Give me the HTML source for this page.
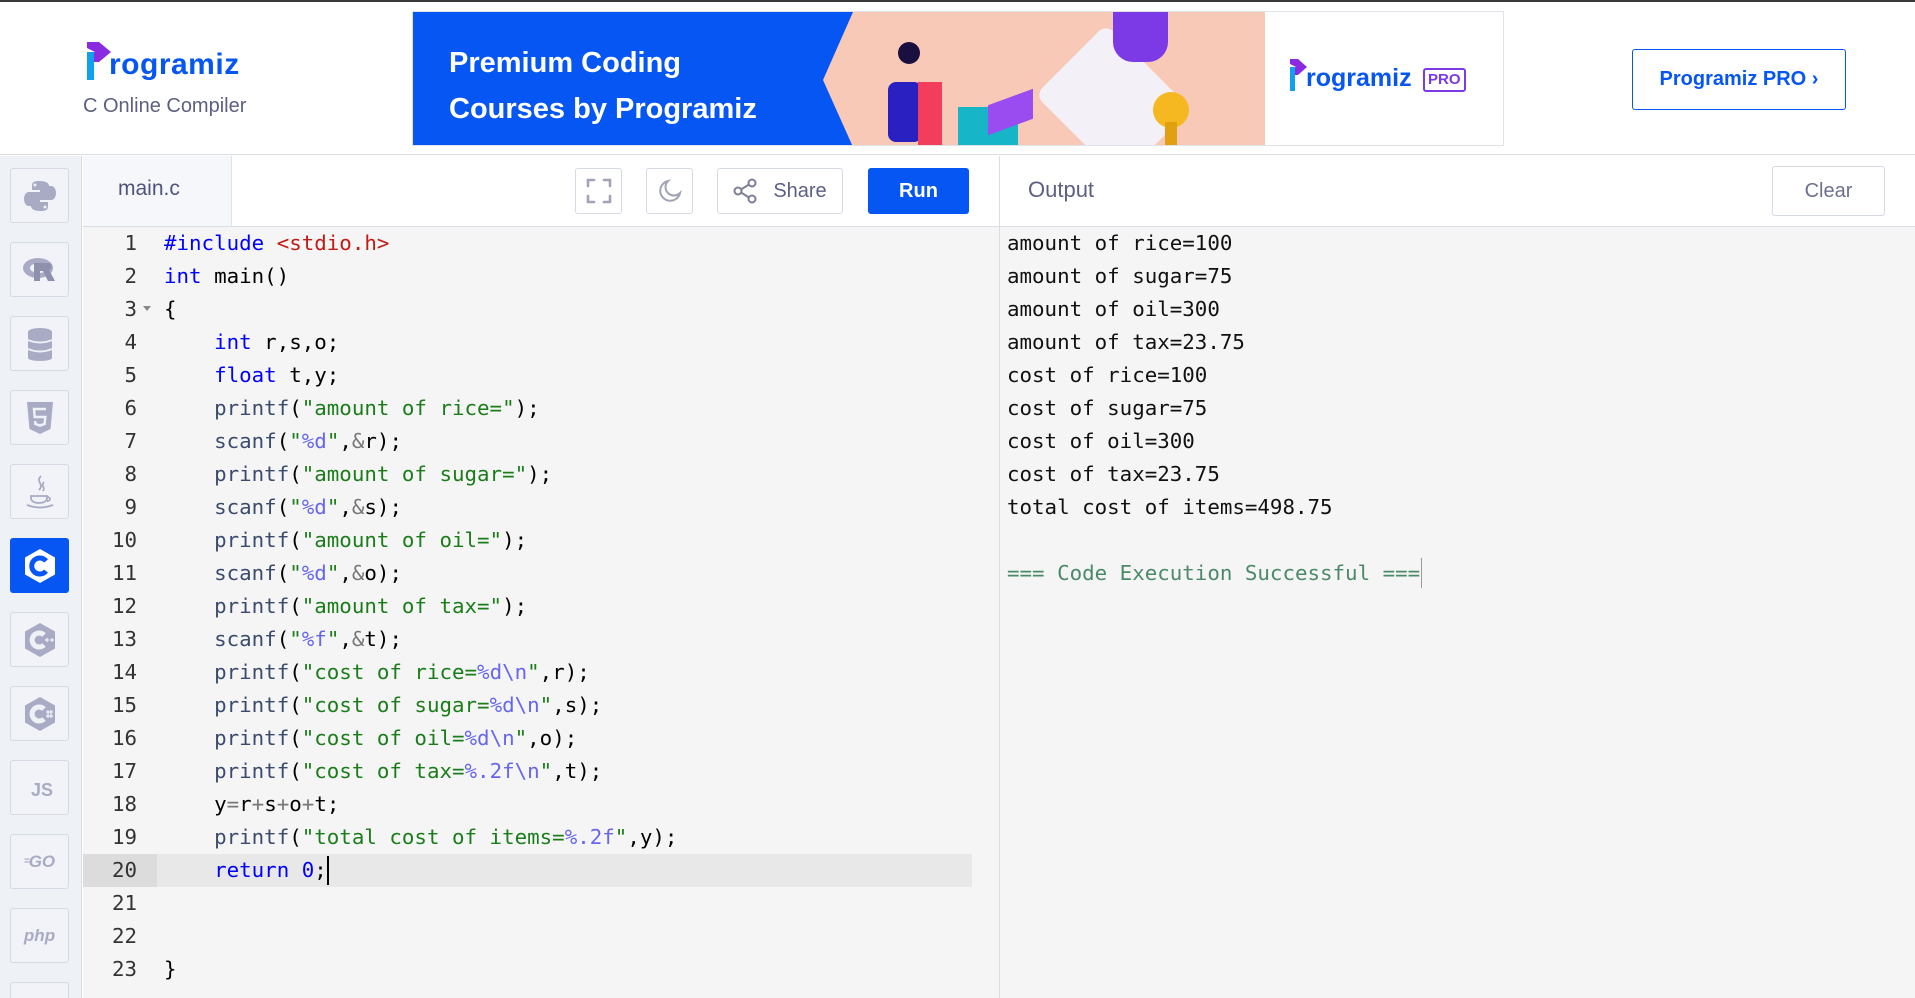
<!DOCTYPE html>
<html style="width:1915px;height:998px;overflow:hidden"><head><meta charset="utf-8"><style>
*{margin:0;padding:0;box-sizing:border-box}
body{width:1915px;height:998px;overflow:hidden;background:#fff;font-family:"Liberation Sans",sans-serif;position:relative}
.abs{position:absolute}
#topbar{left:0;top:0;width:1915px;height:2px;background:#3a3a3a}
#header{left:0;top:2px;width:1915px;height:153px;background:#fff;border-bottom:1px solid #d8dde6}
.side{left:0;top:156px;width:82px;height:842px;background:#eef1f6;border-right:1px solid #d8dde6;overflow:hidden}
.ib{position:absolute;left:10px;width:59px;height:55px;border:1px solid #d6dae4;border-radius:3px;background:#f1f3f8;display:flex;align-items:center;justify-content:center}
.ib.act{background:#0556f3;border-color:#0556f3}
.code{font-family:"DejaVu Sans Mono","Liberation Mono",monospace;font-size:20.8px;line-height:33px;white-space:pre}
.kw{color:#0000ff}.inc{color:#c41a16}.str{color:#1a7d1a}.fn{color:#3b4b6e}.fmt{color:#6666ee}.op{color:#777}
.btn{position:absolute;border:1px solid #d6dae4;border-radius:3px;background:#fff;display:flex;align-items:center;justify-content:center}
</style></head><body>
<div id="topbar" class="abs"></div>
<div id="header" class="abs">
  <svg class="abs" style="left:85px;top:38px" width="30" height="42" viewBox="0 0 30 42">
    <polygon points="2,2 14,2 26,12 14,22 2,22 2,14 10,12 2,8" fill="#8a2be2"/>
    <rect x="2" y="12" width="7" height="28" fill="#10a0f0"/>
  </svg>
  <div class="abs" style="left:109px;top:46px;font-size:30px;font-weight:bold;color:#0556f3;letter-spacing:0.5px">rogramiz</div>
  <div class="abs" style="left:83px;top:93px;font-size:20px;color:#5c5f84">C Online Compiler</div>
  <div class="abs" style="left:412px;top:9px;width:1092px;height:135px;background:#f9c9b8;overflow:hidden;border:1px solid #dfe3ea">
    <div class="abs" style="left:0;top:0;width:440px;height:135px;background:#0556f3;clip-path:polygon(0 0,440px 0,410px 68px,440px 135px,0 135px)"></div>
    <div class="abs" style="left:36px;top:28px;font-size:29px;font-weight:bold;color:#fff;line-height:46px">Premium Coding<br>Courses by Programiz</div>
    <div class="abs" style="left:485px;top:30px;width:22px;height:22px;border-radius:50%;background:#1a1040"></div>
    <div class="abs" style="left:475px;top:70px;width:34px;height:60px;border-radius:8px;background:#2a1fc0"></div>
    <div class="abs" style="left:505px;top:70px;width:24px;height:65px;background:#f23e5c"></div>
    <div class="abs" style="left:545px;top:95px;width:60px;height:45px;background:#16b5c8"></div>
    <div class="abs" style="left:575px;top:85px;width:45px;height:30px;background:#9a4cf0;transform:skewY(-20deg)"></div>
    <div class="abs" style="left:640px;top:40px;width:120px;height:100px;background:#f4f0f8;transform:rotate(45deg);border-radius:10px"></div>
    <div class="abs" style="left:700px;top:0;width:55px;height:50px;background:#7b3ae6;border-radius:0 0 20px 20px"></div>
    <div class="abs" style="left:740px;top:80px;width:36px;height:36px;border-radius:50%;background:#f5b820"></div>
    <div class="abs" style="left:752px;top:110px;width:12px;height:30px;background:#e0a010"></div>
    <div class="abs" style="left:852px;top:0;width:240px;height:135px;background:#fff"></div>
    <svg class="abs" style="left:876px;top:46px" width="20" height="34" viewBox="0 0 20 34"><polygon points="1,1 9,1 18,9 9,17 1,17 1,11 7,9 1,6" fill="#8a2be2"/><rect x="1" y="9" width="5" height="24" fill="#10a0f0"/></svg>
    <div class="abs" style="left:893px;top:52px;font-size:25px;font-weight:bold;color:#0556f3">rogramiz</div>
    <div class="abs" style="left:1010px;top:56px;padding:0 3px;border:2px solid #7b3ae6;border-radius:3px;font-size:15px;font-weight:bold;color:#7b3ae6;line-height:20px">PRO</div>
  </div>
  <div class="abs" style="left:1632px;top:47px;width:214px;height:61px;border:1px solid #0556f3;border-radius:3px;color:#0556f3;font-size:20px;font-weight:bold;display:flex;align-items:center;justify-content:center">Programiz PRO ›</div>
</div>

<div class="abs side">
  <div class="ib" style="top:12px"><svg width="34" height="34" viewBox="0 0 34 34"><path d="M16 2c-7 0-7 3-7 5v4h8v2H6c-3 0-5 3-5 7s2 7 5 7h3v-5c0-3 2-5 5-5h8c2 0 4-2 4-4V7c0-3-3-5-10-5z" fill="#a9abc4"/><path d="M18 32c7 0 7-3 7-5v-4h-8v-2h11c3 0 5-3 5-7s-2-7-5-7h-3v5c0 3-2 5-5 5h-8c-2 0-4 2-4 4v6c0 3 3 5 10 5z" fill="#a9abc4"/><circle cx="12" cy="6" r="1.5" fill="#eef1f6"/><circle cx="22" cy="28" r="1.5" fill="#eef1f6"/></svg></div>
  <div class="ib" style="top:86px"><svg width="36" height="30" viewBox="0 0 36 30"><ellipse cx="16" cy="13" rx="15" ry="10" fill="#a9abc4"/><ellipse cx="17" cy="13" rx="9" ry="5" fill="#eef1f6"/><path d="M12 8h14c4 0 5 6 1 7l6 11h-7l-5-10h-3v10h-6z" fill="#8e90ad"/></svg></div>
  <div class="ib" style="top:160px"><svg width="26" height="34" viewBox="0 0 26 34"><ellipse cx="13" cy="5" rx="12" ry="4" fill="#a9abc4"/><rect x="1" y="5" width="24" height="26" fill="#a9abc4"/><ellipse cx="13" cy="31" rx="12" ry="3" fill="#a9abc4"/><path d="M1 13q12 5 24 0M1 22q12 5 24 0" stroke="#eef1f6" stroke-width="2" fill="none"/></svg></div>
  <div class="ib" style="top:234px"><svg width="28" height="34" viewBox="0 0 28 34"><path d="M1 1h26l-2.5 27L14 33 3.5 28z" fill="#a9abc4"/><path d="M20 8H8l.7 8h10.6l-.7 7-4.6 1.5L9.4 23l-.3-3" stroke="#eef1f6" stroke-width="2.5" fill="none"/></svg></div>
  <div class="ib" style="top:308px"><svg width="30" height="36" viewBox="0 0 30 36"><path d="M16 2c-6 6 4 8-2 14M19 8c-4 4 2 5-1 9" stroke="#a9abc4" stroke-width="1.8" fill="none"/><path d="M6 22h16v2c0 3-3 5-8 5s-8-2-8-5zM22 23c4 0 4 4 0 4" stroke="#a9abc4" stroke-width="1.8" fill="none"/><path d="M2 31q13 5 26 0" stroke="#a9abc4" stroke-width="1.8" fill="none"/></svg></div>
  <div class="ib act" style="top:382px"><svg width="34" height="36" viewBox="0 0 34 36"><path d="M17 1l15 8.5v17L17 35 2 26.5v-17z" fill="#fff"/><path d="M23 13a8 8 0 1 0 0 10" stroke="#0556f3" stroke-width="5" fill="none"/></svg></div>
  <div class="ib" style="top:456px"><svg width="34" height="36" viewBox="0 0 34 36"><path d="M17 1l15 8.5v17L17 35 2 26.5v-17z" fill="#a9abc4"/><path d="M21 13a7 7 0 1 0 0 10" stroke="#eef1f6" stroke-width="5" fill="none"/><path d="M24 16v4M22 18h4M29 16v4M27 18h4" stroke="#eef1f6" stroke-width="1.3"/></svg></div>
  <div class="ib" style="top:530px"><svg width="34" height="36" viewBox="0 0 34 36"><path d="M17 1l15 8.5v17L17 35 2 26.5v-17z" fill="#a9abc4"/><path d="M21 13a7 7 0 1 0 0 10" stroke="#eef1f6" stroke-width="5" fill="none"/><path d="M25 14v8M28 14v8M23 16h7M23 20h7" stroke="#eef1f6" stroke-width="1.3"/></svg></div>
  <div class="ib" style="top:604px;font-weight:bold;font-size:18px;color:#a9abc4;padding-left:5px;padding-top:6px">JS</div>
  <div class="ib" style="top:678px;font-weight:bold;font-style:italic;font-size:17px;color:#a9abc4"><span style="font-size:10px;letter-spacing:-1px">=</span>GO</div>
  <div class="ib" style="top:752px;font-weight:bold;font-style:italic;font-size:17px;color:#a9abc4">php</div>
  <div class="ib" style="top:826px"></div>
</div>

<div class="abs" style="left:83px;top:156px;width:916px;height:71px;background:#fff;border-bottom:1px solid #d8dde6"></div>
<div class="abs" style="left:83px;top:156px;width:149px;height:70px;background:#f6f7fa;border-right:1px solid #dfe3ea"></div>
<div class="abs" style="left:118px;top:177px;font-size:21px;color:#50537a">main.c</div>
<div class="btn" style="left:575px;top:168px;width:47px;height:46px"><svg width="26" height="26" viewBox="0 0 26 26" fill="none" stroke="#a2a2b8" stroke-width="2.6" stroke-linecap="round"><path d="M2 8V2h6M18 2h6v6M24 18v6h-6M8 24H2v-6"/></svg></div>
<div class="btn" style="left:646px;top:168px;width:47px;height:46px"><svg width="24" height="24" viewBox="0 0 24 24" fill="none" stroke="#a2a2b8" stroke-width="2"><path d="M10 2a10 10 0 1 0 12 12A8 8 0 0 1 10 2z"/></svg></div>
<div class="btn" style="left:717px;top:168px;width:126px;height:46px;color:#5c5f84;font-size:20px;gap:14px"><svg width="26" height="26" viewBox="0 0 26 26" fill="none" stroke="#7e7f98" stroke-width="2"><circle cx="19" cy="5" r="3.5"/><circle cx="5" cy="13" r="3.5"/><circle cx="19" cy="21" r="3.5"/><path d="M8 11.5l8-5M8 14.5l8 5"/></svg>Share</div>
<div class="abs" style="left:868px;top:168px;width:101px;height:46px;background:#0556f3;border-radius:3px;color:#fff;font-weight:bold;font-size:20px;display:flex;align-items:center;justify-content:center">Run</div>

<div class="abs" style="left:83px;top:227px;width:916px;height:771px;background:#f5f5f5"></div>
<div class="abs" style="left:83px;top:854px;width:74px;height:33px;background:#dcdcdc"></div>
<div class="abs" style="left:157px;top:854px;width:815px;height:33px;background:#e8e8e8"></div>
<div class="abs code" style="left:83px;top:227px;width:54px;text-align:right;color:#333">1
2
3
4
5
6
7
8
9
10
11
12
13
14
15
16
17
18
19
20
21
22
23</div>
<div class="abs" style="left:143px;top:306px;width:0;height:0;border-left:4px solid transparent;border-right:4px solid transparent;border-top:5px solid #888"></div>
<div class="abs code" style="left:164px;top:227px;color:#000"><span class="kw">#include</span> <span class="inc">&lt;stdio.h&gt;</span>
<span class="kw">int</span> main()
{
    <span class="kw">int</span> r,s,o;
    <span class="kw">float</span> t,y;
    <span class="fn">printf</span>(<span class="str">"amount of rice="</span>);
    <span class="fn">scanf</span>(<span class="str">"<span class="fmt">%d</span>"</span>,<span class="op">&amp;</span>r);
    <span class="fn">printf</span>(<span class="str">"amount of sugar="</span>);
    <span class="fn">scanf</span>(<span class="str">"<span class="fmt">%d</span>"</span>,<span class="op">&amp;</span>s);
    <span class="fn">printf</span>(<span class="str">"amount of oil="</span>);
    <span class="fn">scanf</span>(<span class="str">"<span class="fmt">%d</span>"</span>,<span class="op">&amp;</span>o);
    <span class="fn">printf</span>(<span class="str">"amount of tax="</span>);
    <span class="fn">scanf</span>(<span class="str">"<span class="fmt">%f</span>"</span>,<span class="op">&amp;</span>t);
    <span class="fn">printf</span>(<span class="str">"cost of rice=<span class="fmt">%d\n</span>"</span>,r);
    <span class="fn">printf</span>(<span class="str">"cost of sugar=<span class="fmt">%d\n</span>"</span>,s);
    <span class="fn">printf</span>(<span class="str">"cost of oil=<span class="fmt">%d\n</span>"</span>,o);
    <span class="fn">printf</span>(<span class="str">"cost of tax=<span class="fmt">%.2f\n</span>"</span>,t);
    y<span class="op">=</span>r<span class="op">+</span>s<span class="op">+</span>o<span class="op">+</span>t;
    <span class="fn">printf</span>(<span class="str">"total cost of items=<span class="fmt">%.2f</span>"</span>,y);
    <span class="kw">return</span> <span class="kw">0</span>;
 
 
}</div>
<div class="abs" style="left:327px;top:856px;width:2px;height:29px;background:#000"></div>

<div class="abs" style="left:999px;top:156px;width:1px;height:842px;background:#d8dde6"></div>
<div class="abs" style="left:1000px;top:156px;width:915px;height:71px;background:#fff;border-bottom:1px solid #d8dde6"></div>
<div class="abs" style="left:1028px;top:177px;font-size:22px;color:#5c5f84">Output</div>
<div class="btn" style="left:1772px;top:166px;width:113px;height:50px;color:#6e7090;font-size:20px">Clear</div>
<div class="abs" style="left:1000px;top:227px;width:915px;height:771px;background:#f5f5f5"></div>
<div class="abs code" style="left:1007px;top:227px;color:#111">amount of rice=100
amount of sugar=75
amount of oil=300
amount of tax=23.75
cost of rice=100
cost of sugar=75
cost of oil=300
cost of tax=23.75
total cost of items=498.75

<span style="color:#4a8a68">=== Code Execution Successful ===</span></div>
<div class="abs" style="left:1421px;top:558px;width:1px;height:30px;background:#999"></div>
</body></html>
